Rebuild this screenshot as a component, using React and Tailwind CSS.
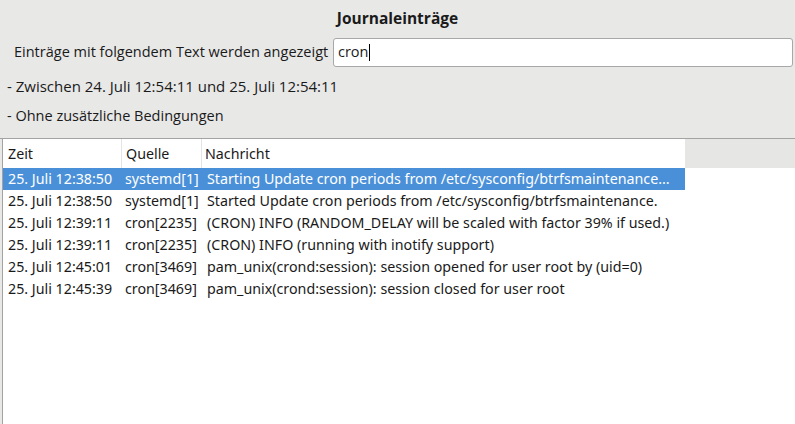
export default function App() {
  const rows = [
    ["25. Juli 12:38:50", "systemd[1]", "Starting Update cron periods from /etc/sysconfig/btrfsmaintenance..."],
    ["25. Juli 12:38:50", "systemd[1]", "Started Update cron periods from /etc/sysconfig/btrfsmaintenance."],
    ["25. Juli 12:39:11", "cron[2235]", "(CRON) INFO (RANDOM_DELAY will be scaled with factor 39% if used.)"],
    ["25. Juli 12:39:11", "cron[2235]", "(CRON) INFO (running with inotify support)"],
    ["25. Juli 12:45:01", "cron[3469]", "pam_unix(crond:session): session opened for user root by (uid=0)"],
    ["25. Juli 12:45:39", "cron[3469]", "pam_unix(crond:session): session closed for user root"],
  ];
  return (
    <div className="w-[795px] h-[424px] bg-[#e8e8e7] flex flex-col overflow-hidden text-[14.5px] text-[#1a1a1a]" style={{ fontFamily: '"Open Sans", "Noto Sans", sans-serif' }}>
      <div className="h-[37px] flex items-center justify-center font-bold text-[15.5px] pt-[1px]">Journaleinträge</div>
      <div className="flex items-center h-[30px] pl-[14px] pr-[2px]">
        <span className="w-[319px]">Einträge mit folgendem Text werden angezeigt</span>
        <div className="flex-1 h-[29px] bg-white border border-[#a8a8a8] rounded-[3px] flex items-center pl-[4px]">
          <span>cron</span>
          <span className="w-[1px] h-[17px] bg-black"></span>
        </div>
      </div>
      <div className="pl-[7px] h-[29px] flex items-center mt-[5px] text-[15px]">- Zwischen 24. Juli 12:54:11 und 25. Juli 12:54:11</div>
      <div className="pl-[7px] h-[29px] flex items-center">- Ohne zusätzliche Bedingungen</div>
      <div className="mt-[8px] border-t border-[#a3a3a3] flex-1 pl-[2px] flex">
        <div className="flex-1 bg-white border-l border-[#a3a3a3] flex flex-col text-[14.25px]" style={{ fontFamily: '"Noto Sans", sans-serif' }}>
          <div className="flex h-[29px] items-center">
            <div className="w-[682px] h-full flex items-center bg-white">
              <div className="w-[119px] pl-[5px] h-full flex items-center border-r border-[#e4e4e4]">Zeit</div>
              <div className="w-[80px] pl-[4px] h-full flex items-center border-r border-[#e4e4e4]">Quelle</div>
              <div className="pl-[3px]">Nachricht</div>
            </div>
            <div className="flex-1 h-full bg-[#e6e6e5]"></div>
          </div>
          {rows.map((r, i) => (
            <div key={i} className={"flex h-[22px] items-center w-[682px] whitespace-nowrap " + (i === 0 ? "bg-[#4a90d9] text-white" : "")}>
              <div className="w-[120px] pl-[5px]">{r[0]}</div>
              <div className="w-[81px] pl-[2px]">{r[1]}</div>
              <div className="pl-[3px]">{r[2]}</div>
            </div>
          ))}
        </div>
      </div>
    </div>
  );
}
